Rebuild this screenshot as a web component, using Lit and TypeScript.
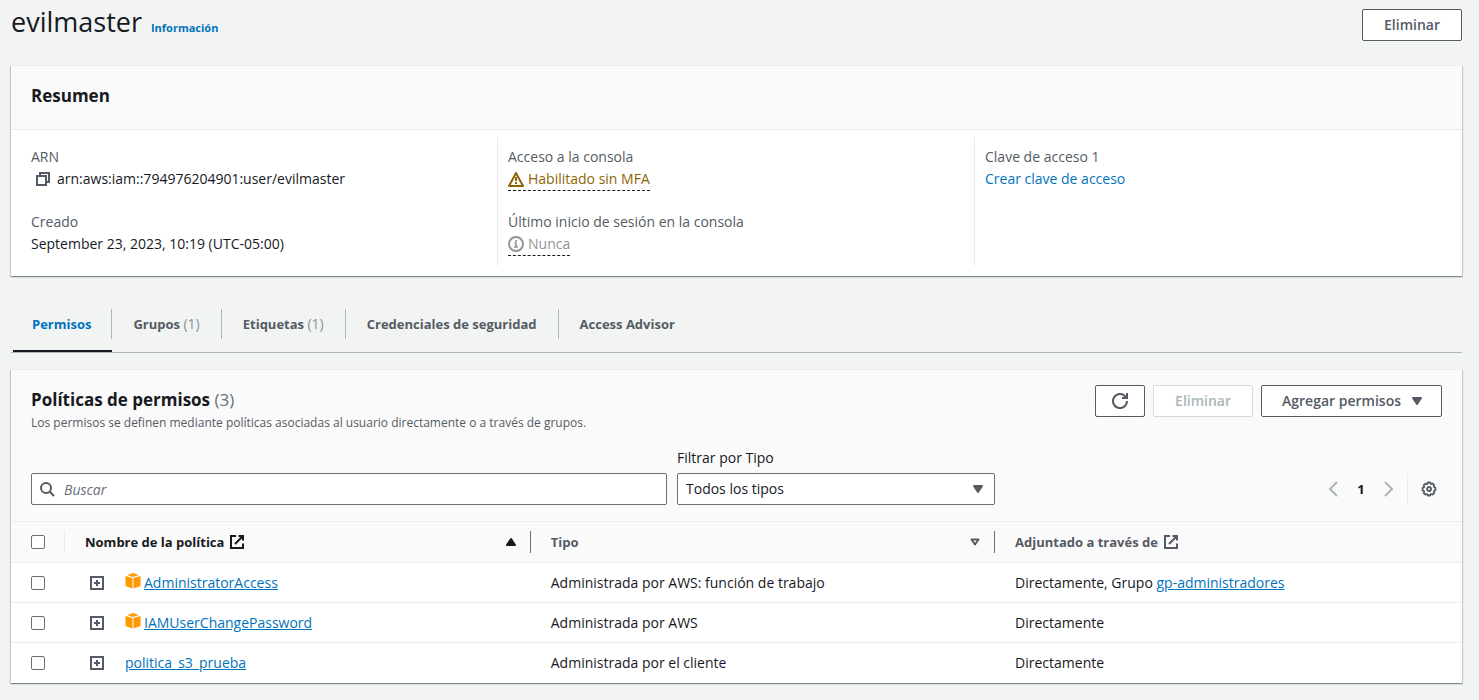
import { LitElement, html, css, svg, nothing } from "lit";
import { customElement, state } from "lit/decorators.js";
import { classMap } from "lit/directives/class-map.js";

interface Policy {
  name: string;
  managed: boolean;
  type: string;
  group?: string;
}

const POLICIES: Policy[] = [
  { name: "AdministratorAccess", managed: true, type: "Administrada por AWS: función de trabajo", group: "gp-administradores" },
  { name: "IAMUserChangePassword", managed: true, type: "Administrada por AWS" },
  { name: "politica_s3_prueba", managed: false, type: "Administrada por el cliente" },
];

const TABS: { label: string; count?: number }[] = [
  { label: "Permisos" },
  { label: "Grupos", count: 1 },
  { label: "Etiquetas", count: 1 },
  { label: "Credenciales de seguridad" },
  { label: "Access Advisor" },
];

const icon = (body: unknown) =>
  html`<svg class="icon" viewBox="0 0 16 16" width="16" height="16" fill="none" stroke="currentColor" stroke-width="2" aria-hidden="true">${body}</svg>`;

const copyIcon = icon(svg`<path d="M2 5h9v9H2zM5 5V2h9v9h-3" />`);
const warningIcon = icon(svg`<path d="M8 2 15 15H1z" stroke-linejoin="round" /><path d="M8 6v4M8 11v2" />`);
const infoIcon = icon(svg`<circle cx="8" cy="8" r="7" /><path d="M8 11V7H6.5M8 6V4M6 11h4" stroke-width="1.6" />`);
const searchIcon = icon(svg`<circle cx="7" cy="7" r="5" /><path d="m15 15-4.5-4.5" />`);
const refreshIcon = icon(svg`<path d="M10 5h5V0M15 8a7 7 0 1 1-1.5-4.3L15 5" />`);
const prevIcon = icon(svg`<path d="m12 1-7 7 7 7" />`);
const nextIcon = icon(svg`<path d="m4 1 7 7-7 7" />`);
const gearIcon = icon(svg`<path d="M6.8 1h2.4l.7 1.5 1.6-.5 1.7 1.7-.5 1.6 1.7.9v2.6l-1.6.9.5 1.6-1.7 1.7-1.7-.5-.8 1.5H6.8l-.8-1.5-1.6.5-1.7-1.7.5-1.6-1.6-.8V6.400l1.600-.9-.5-1.600 1.700-1.700 1.700.5z" transform="translate(0 .5)" stroke-width="1.800" stroke-linejoin="round" /><circle cx="8" cy="8" r="2" stroke-width="1.800" />`);
const externalIcon = icon(svg`<path d="M7 2H2v12h12V9.500M9.500 2H14v4.500M14 2 6 10" />`);
const expandIcon = icon(svg`<path d="M2 2h12v12H2zM8 5v6M5 8h6" />`);
const downIcon = icon(svg`<path d="M4 5h8l-4 6z" fill="currentColor" stroke-linejoin="round" />`);
const upIcon = icon(svg`<path d="M4 11h8L8 5z" fill="currentColor" stroke-linejoin="round" />`);
const sortIcon = icon(svg`<path d="M4.500 5.500h7L8 10.500z" stroke-linejoin="round" />`);
const cubeIcon = html`<svg class="cube" viewBox="0 0 16 16" width="16" height="16" fill="#f90" aria-hidden="true">
  <path d="M8 0 14 2 8 4 2 2zM.5 3l7 2v10.500L.5 13zM15.500 3l-7 2v10.500l7-2.500z" />
</svg>`;

@customElement("app-root")
export class AppRoot extends LitElement {
  @state() private activeTab = 0;
  @state() private query = "";

  static styles = css`
    :host {
      display: block;
      box-sizing: border-box;
      min-height: 100vh;
      padding: 8px 17px 16px 11px;
      background: #f2f3f3;
      color: #16191f;
      font: 14px/22px "Open Sans", "Noto Sans", sans-serif;
    }
    * { box-sizing: border-box; }
    h1, h2, p, dl, dd, dt { margin: 0; }
    button, input, select { font: inherit; color: inherit; }
    a { color: #0073bb; text-decoration: none; }
    .icon { display: block; flex: none; }

    .page-head { display: flex; justify-content: space-between; align-items: flex-start; margin-bottom: 24px; }
    .title { display: flex; align-items: baseline; gap: 9px; }
    h1 { font-size: 27px; line-height: 28px; font-weight: 400; }
    .info { font-size: 11px; font-weight: 700; }

    .btn {
      display: flex;
      align-items: center;
      gap: 8px;
      height: 32px;
      margin: 0;
      padding: 0 21px;
      border: 1px solid #545b64;
      border-radius: 2px;
      background: #fff;
      color: #545b64;
      font-weight: 600;
    }
    .page-head .btn { margin-top: 1px; }
    .btn.square { padding: 0 16px; }
    .btn.menu { padding: 0 16px 0 20px; }
    .btn:disabled { border-color: #d5dbdb; color: #aab7b8; }

    .card {
      border-top: 1px solid #eaeded;
      background: #fff;
      box-shadow: 0 1px 1px 0 rgba(0, 28, 36, 0.3), 1px 1px 1px 0 rgba(0, 28, 36, 0.15), -1px 1px 1px 0 rgba(0, 28, 36, 0.15);
    }
    h2 { font-size: 17px; line-height: 22px; font-weight: 700; }
    .summary-head { padding: 19px 20px 22px; border-bottom: 1px solid #eaeded; background: #fafafa; }
    .summary { display: grid; grid-template-columns: repeat(3, 1fr); padding: 7px 10px 10px; }
    .facts { display: flex; flex-direction: column; gap: 21px; padding: 9px 10px 11px; border-right: 1px solid #eaeded; }
    .facts:last-child { border-right: 0; }
    dt { color: #545b64; }
    dd { display: flex; align-items: center; height: 22px; }
    .copy { display: flex; margin: 0; padding: 0 6px 0 4px; border: 0; background: none; color: #545b64; }
    .status { display: flex; align-items: center; gap: 4px; padding-top: 1px; border-bottom: 1px dashed #16191f; }
    .warning { color: #8d6605; }
    .muted { color: #949494; }

    .tabs { display: flex; align-items: center; margin-top: 25px; padding-left: 2px; border-bottom: 1px solid #aab7b8; }
    .tab {
      height: 51px;
      margin: 0;
      padding: 0 0 4px;
      border: 0;
      border-bottom: 2px solid transparent;
      background: none;
      color: #545b64;
      font-size: 13px;
      font-weight: 700;
    }
    .tab span { display: block; padding: 4px 21px; border-right: 1px solid #aab7b8; }
    .tab:first-child span { padding: 4px 20px 4px 19px; }
    .tab:last-child span { border-right: 0; }
    .tab small { color: #879596; font-size: 14px; font-weight: 400; }
    .tab.active { border-bottom-color: #16191f; color: #0073bb; }

    .policies { margin-top: 16px; }
    .tools { padding: 15px 20px 16px; border-bottom: 1px solid #eaeded; background: #fafafa; }
    .tools-head { display: flex; justify-content: space-between; align-items: flex-start; }
    .tools-head h2 { padding: 4px 0 1px; }
    h2 small { color: #687078; font-size: 17px; font-weight: 400; }
    .hint { color: #545b64; font-size: 12px; }
    .actions { display: flex; gap: 8px; }
    .filters { display: flex; align-items: flex-end; gap: 10px; padding-top: 13px; }
    .search { position: relative; flex: 2 1 0; }
    .search .icon { position: absolute; top: 8px; left: 8px; color: #545b64; }
    .field { width: 100%; height: 32px; margin: 0; border: 1px solid #687078; border-radius: 2px; background: #fff; }
    .search .field { display: block; padding: 0 8px 0 32px; }
    .field::placeholder { color: #687078; font-style: italic; opacity: 1; }
    .type-filter { position: relative; flex: 1 1 0; }
    .type-filter label { display: block; padding-bottom: 4px; }
    .type-filter .field { display: block; padding: 0 32px 0 8px; appearance: none; }
    .type-filter .icon { position: absolute; right: 9px; bottom: 8px; color: #545b64; pointer-events: none; }
    .side { display: flex; flex: 0 0 437px; justify-content: flex-end; align-items: center; height: 32px; }
    .side button { display: flex; margin: 0; padding: 0; border: 0; background: none; color: #aab7b8; }
    .side .page { width: 40px; justify-content: center; color: #16191f; font-size: 13px; font-weight: 700; }
    .side .prefs { margin-left: 10px; padding: 8px 5px 8px 13px; border-left: 1px solid #eaeded; color: #545b64; }

    table { width: 100%; border-collapse: separate; border-spacing: 0; table-layout: fixed; }
    .col-check { width: 54px; }
    .col-name { width: 32.1%; }
    .col-type { width: 32%; }
    th { height: 41px; padding: 0; border-bottom: 1px solid #eaeded; background: #fafafa; color: #545b64; font-size: 13px; font-weight: 700; text-align: left; }
    .cell { display: flex; align-items: center; justify-content: space-between; height: 22px; padding: 0 11px 0 20px; border-right: 1px solid #687078; }
    th:first-child .cell { border-right-color: #eaeded; }
    th:last-child .cell { border-right: 0; }
    .sorted { color: #16191f; }
    .label { display: flex; align-items: center; gap: 5px; }
    td { height: 40px; padding: 1px 20px 0; border-bottom: 1px solid #eaeded; }
    tbody tr:last-child td { border-bottom-color: transparent; }
    .check { display: block; width: 14px; height: 14px; margin: 0; border: 1px solid #687078; border-radius: 2px; background: #fff; appearance: none; }
    .check:checked { border-color: #0073bb; background: #0073bb; }
    .name { display: flex; align-items: center; gap: 3px; padding-left: 4px; }
    .name a, .link { text-decoration: underline; }
    .expand { display: flex; margin: 0 17px 0 0; padding: 0; border: 0; background: none; color: #545b64; }
    .cube { display: block; margin-bottom: 4px; }
  `;

  private renderRow(p: Policy) {
    return html`<tr>
      <td><input class="check" type="checkbox" aria-label="Seleccionar ${p.name}" /></td>
      <td>
        <div class="name">
          <button class="expand" aria-label="Expandir ${p.name}">${expandIcon}</button>
          ${p.managed ? cubeIcon : nothing}<a href="#">${p.name}</a>
        </div>
      </td>
      <td>${p.type}</td>
      <td>Directamente${p.group ? html`, Grupo <a class="link" href="#">${p.group}</a>` : nothing}</td>
    </tr>`;
  }

  render() {
    const rows = POLICIES.filter((p) => p.name.toLowerCase().includes(this.query.toLowerCase()));
    return html`
      <header class="page-head">
        <div class="title"><h1>evilmaster</h1><a class="info" href="#">Información</a></div>
        <button class="btn">Eliminar</button>
      </header>

      <section class="card">
        <div class="summary-head"><h2>Resumen</h2></div>
        <div class="summary">
          <dl class="facts">
            <div><dt>ARN</dt><dd><button class="copy" aria-label="Copiar ARN">${copyIcon}</button>arn:aws:iam::794976204901:user/evilmaster</dd></div>
            <div><dt>Creado</dt><dd>September 23, 2023, 10:19 (UTC-05:00)</dd></div>
          </dl>
          <dl class="facts">
            <div><dt>Acceso a la consola</dt><dd><span class="status warning">${warningIcon}Habilitado sin MFA</span></dd></div>
            <div><dt>Último inicio de sesión en la consola</dt><dd><span class="status muted">${infoIcon}Nunca</span></dd></div>
          </dl>
          <dl class="facts">
            <div><dt>Clave de acceso 1</dt><dd><a href="#">Crear clave de acceso</a></dd></div>
          </dl>
        </div>
      </section>

      <nav class="tabs" role="tablist">
        ${TABS.map((t, i) => html`<button
          class=${classMap({ tab: true, active: i === this.activeTab })}
          role="tab"
          aria-selected=${i === this.activeTab}
          @click=${() => (this.activeTab = i)}
        ><span>${t.label}${t.count ? html` <small>(${t.count})</small>` : nothing}</span></button>`)}
      </nav>

      <section class="card policies">
        <div class="tools">
          <div class="tools-head">
            <div>
              <h2>Políticas de permisos <small>(3)</small></h2>
              <p class="hint">Los permisos se definen mediante políticas asociadas al usuario directamente o a través de grupos.</p>
            </div>
            <div class="actions">
              <button class="btn square" aria-label="Actualizar">${refreshIcon}</button>
              <button class="btn" disabled>Eliminar</button>
              <button class="btn menu">Agregar permisos ${downIcon}</button>
            </div>
          </div>
          <div class="filters">
            <div class="search">
              ${searchIcon}
              <input class="field" type="text" placeholder="Buscar" aria-label="Buscar" .value=${this.query}
                @input=${(e: Event) => (this.query = (e.target as HTMLInputElement).value)} />
            </div>
            <div class="type-filter">
              <label for="type">Filtrar por Tipo</label>
              <select class="field" id="type"><option>Todos los tipos</option></select>
              ${downIcon}
            </div>
            <div class="side">
              <button aria-label="Página anterior">${prevIcon}</button>
              <button class="page">1</button>
              <button aria-label="Página siguiente">${nextIcon}</button>
              <button class="prefs" aria-label="Preferencias">${gearIcon}</button>
            </div>
          </div>
        </div>
        <table>
          <colgroup><col class="col-check" /><col class="col-name" /><col class="col-type" /><col /></colgroup>
          <thead>
            <tr>
              <th><div class="cell"><input class="check" type="checkbox" aria-label="Seleccionar todo" /></div></th>
              <th><div class="cell sorted"><span class="label">Nombre de la política ${externalIcon}</span>${upIcon}</div></th>
              <th><div class="cell"><span class="label">Tipo</span>${sortIcon}</div></th>
              <th><div class="cell"><span class="label">Adjuntado a través de ${externalIcon}</span></div></th>
            </tr>
          </thead>
          <tbody>${rows.map((p) => this.renderRow(p))}</tbody>
        </table>
      </section>
    `;
  }
}
